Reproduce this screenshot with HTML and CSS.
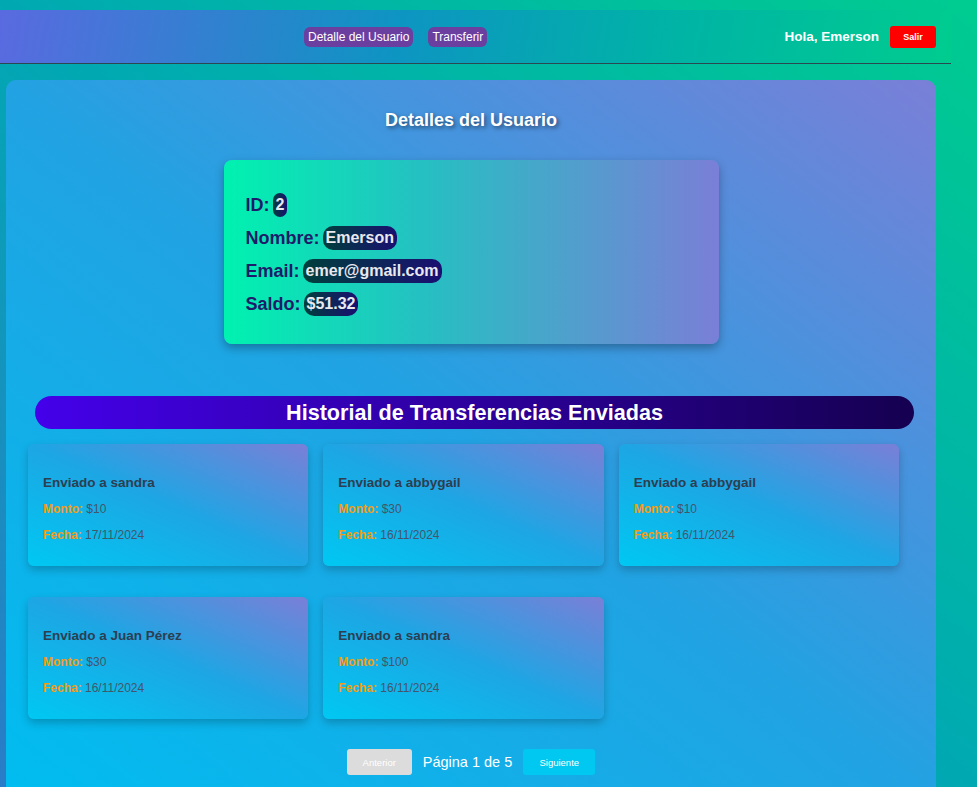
FILE: index.html
```html
<!DOCTYPE html>
<html lang="es">
<head>
<meta charset="utf-8">
<title>Detalles del Usuario</title>
<link rel="stylesheet" href="styles.css">
</head>
<body>
<header class="topbar">
  <nav class="nav">
    <a class="nav-btn" href="#">Detalle del Usuario</a>
    <a class="nav-btn" href="#">Transferir</a>
  </nav>
  <div class="user-area">
    <span class="greet">Hola, Emerson</span>
    <button class="logout">Salir</button>
  </div>
</header>

<main class="panel">
  <h2 class="title">Detalles del Usuario</h2>

  <section class="user-card">
    <div class="row"><strong class="lbl">ID:</strong><span class="pill">2</span></div>
    <div class="row"><strong class="lbl">Nombre:</strong><span class="pill">Emerson</span></div>
    <div class="row"><strong class="lbl">Email:</strong><span class="pill">emer@gmail.com</span></div>
    <div class="row"><strong class="lbl">Saldo:</strong><span class="pill">$51.32</span></div>
  </section>

  <h2 class="history">Historial de Transferencias Enviadas</h2>

  <section class="grid">
    <article class="tcard">
      <h3 class="tname">Enviado a sandra</h3>
      <p class="tline"><strong class="tk">Monto:</strong> $10</p>
      <p class="tline"><strong class="tk">Fecha:</strong> 17/11/2024</p>
    </article>
    <article class="tcard">
      <h3 class="tname">Enviado a abbygail</h3>
      <p class="tline"><strong class="tk">Monto:</strong> $30</p>
      <p class="tline"><strong class="tk">Fecha:</strong> 16/11/2024</p>
    </article>
    <article class="tcard">
      <h3 class="tname">Enviado a abbygail</h3>
      <p class="tline"><strong class="tk">Monto:</strong> $10</p>
      <p class="tline"><strong class="tk">Fecha:</strong> 16/11/2024</p>
    </article>
    <article class="tcard">
      <h3 class="tname">Enviado a Juan Pérez</h3>
      <p class="tline"><strong class="tk">Monto:</strong> $30</p>
      <p class="tline"><strong class="tk">Fecha:</strong> 16/11/2024</p>
    </article>
    <article class="tcard">
      <h3 class="tname">Enviado a sandra</h3>
      <p class="tline"><strong class="tk">Monto:</strong> $100</p>
      <p class="tline"><strong class="tk">Fecha:</strong> 16/11/2024</p>
    </article>
  </section>

  <div class="pager">
    <button class="pbtn prev">Anterior</button>
    <span class="pinfo">Página 1 de 5</span>
    <button class="pbtn next">Siguiente</button>
  </div>
</main>
</body>
</html>
```

FILE: styles.css
```css
* { box-sizing: border-box; }

html, body { margin: 0; }

body {
  font-family: "Liberation Sans", Arial, sans-serif;
  padding-top: 10px;
  min-height: 100vh;
  background: linear-gradient(to top right, #2a7cc8 0%, #00a9b2 50%, #00cc90 100%);
  background-attachment: fixed;
}

.topbar {
  width: 951px;
  height: 54px;
  display: flex;
  align-items: center;
  padding: 0 15px 0 304px;
  background: linear-gradient(100deg, #5a6ae0 0%, #0d95c2 42%, #00b3a6 70%, #00cc8f 100%);
  border-bottom: 1px solid #2b4851;
}

.nav { display: flex; gap: 15px; }

.nav-btn {
  display: block;
  background: #6a3fa0;
  color: #fff;
  font-size: 12px;
  line-height: 20px;
  padding: 0 4px;
  border-radius: 6px;
  text-decoration: none;
}

.user-area {
  margin-left: auto;
  display: flex;
  align-items: center;
  gap: 11px;
}

.greet { color: #fff; font-weight: bold; font-size: 13.5px; }

.logout {
  background: #ff0000;
  color: #fff;
  border: none;
  font-family: inherit;
  font-weight: bold;
  font-size: 9px;
  width: 46px;
  height: 22px;
  border-radius: 3px;
  padding: 0;
}

.panel {
  width: 930px;
  margin: 16px 0 0 6px;
  border-radius: 10px;
  padding: 30px 0 24px;
  background: linear-gradient(to top right, #00bdf0 0%, #22a2e2 50%, #7a7fd7 100%);
}

.title {
  margin: 0;
  text-align: center;
  color: #fff;
  font-size: 18px;
  line-height: 20px;
  text-shadow: 2px 2px 4px rgba(0, 0, 0, 0.5);
}

.user-card {
  width: 495px;
  height: 184px;
  margin: 30px auto 0;
  padding: 33px 22px 0;
  border-radius: 8px;
  background: linear-gradient(to right, #00f2b0 0%, #25c0c2 40%, #7a7fd7 100%);
  box-shadow: 0 4px 10px rgba(0, 0, 0, 0.3);
  display: flex;
  flex-direction: column;
  gap: 9px;
}

.row { line-height: 24px; font-size: 18px; display: flex; align-items: center; }

.lbl { color: #1e1b6a; }

.pill {
  margin-left: 3px;
  padding: 0 3px;
  border-radius: 10px;
  font-size: 16px;
  font-weight: bold;
  color: #e9e9ee;
  background: linear-gradient(to right, #003f3c, #1a0f72);
}

.history {
  margin: 52px 0 0 29px;
  width: 879px;
  height: 33px;
  line-height: 33px;
  border-radius: 17px;
  text-align: center;
  color: #fff;
  font-size: 21.6px;
  background: linear-gradient(to right, #4400ea, #150050);
}

.grid {
  margin: 15px 0 0 22px;
  width: 871px;
  display: grid;
  grid-template-columns: repeat(3, 1fr);
  column-gap: 15px;
  row-gap: 31px;
}

.tcard {
  height: 122px;
  padding: 15px;
  border-radius: 6px;
  background: linear-gradient(to top right, #00c8f2 0%, #1da6e4 50%, #7a7fd7 100%);
  box-shadow: 0 4px 8px rgba(0, 0, 0, 0.22);
}

.tname {
  margin: 16px 0 0;
  font-size: 13.5px;
  line-height: 16px;
  color: #2c3e50;
}

.tline {
  margin: 11px 0 0;
  font-size: 12px;
  line-height: 14px;
  color: #44566a;
}

.tline + .tline { margin-top: 12px; }

.tk { color: #f39c12; }

.pager {
  margin-top: 30px;
  display: flex;
  justify-content: center;
  align-items: center;
  gap: 11px;
}

.pbtn {
  border: none;
  font-family: inherit;
  font-size: 9.5px;
  color: #fff;
  height: 26px;
  border-radius: 3px;
  padding: 0;
}

.prev { background: #dcdcdc; width: 65px; }
.next { background: #00c8f0; width: 72px; }

.pinfo { color: #fff; font-size: 14.5px; }
```
